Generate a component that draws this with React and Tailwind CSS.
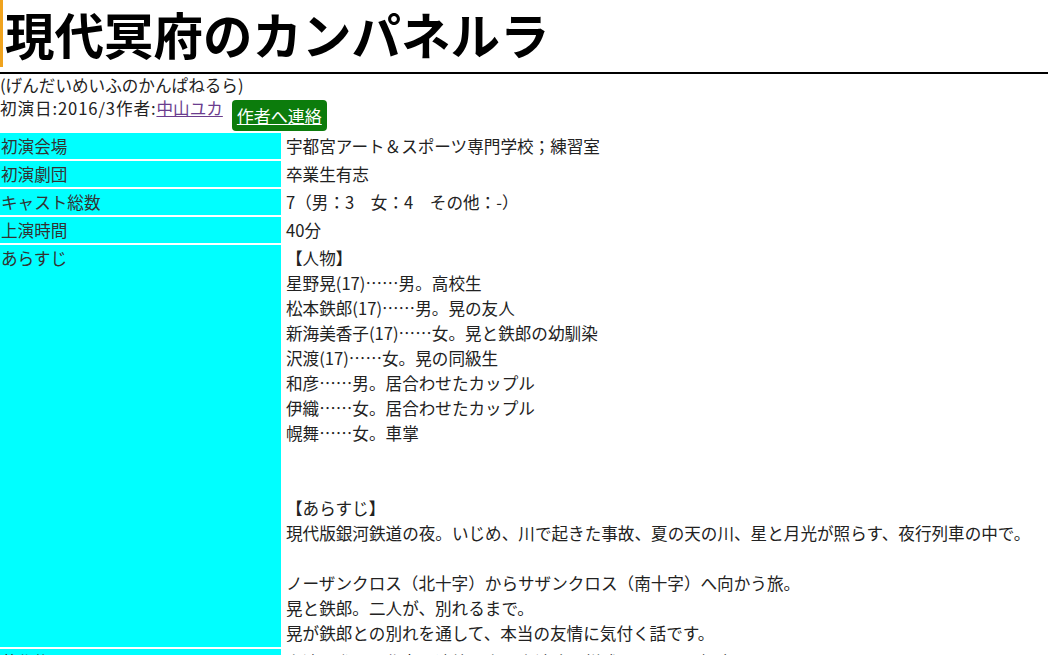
export default function App() {
  const cast = [
    "【人物】",
    "星野晃(17)……男。高校生",
    "松本鉄郎(17)……男。晃の友人",
    "新海美香子(17)……女。晃と鉄郎の幼馴染",
    "沢渡(17)……女。晃の同級生",
    "和彦……男。居合わせたカップル",
    "伊織……女。居合わせたカップル",
    "幌舞……女。車掌",
    "",
    "",
    "【あらすじ】",
    "現代版銀河鉄道の夜。いじめ、川で起きた事故、夏の天の川、星と月光が照らす、夜行列車の中で。",
    "",
    "ノーザンクロス（北十字）からサザンクロス（南十字）へ向かう旅。",
    "晃と鉄郎。二人が、別れるまで。",
    "晃が鉄郎との別れを通して、本当の友情に気付く話です。",
  ];
  const rows = [
    ["初演会場", "宇都宮アート＆スポーツ専門学校；練習室"],
    ["初演劇団", "卒業生有志"],
    ["キャスト総数", "7（男：3　女：4　その他：-）"],
    ["上演時間", "40分"],
  ];
  return (
    <div className="min-h-[655px] bg-white font-['Noto_Sans_CJK_JP','Noto_Sans',sans-serif] text-[16.6px] text-[#222]">
      <div className="border-b-2 border-black pb-[5px]">
        <h1 className="border-l-[3px] border-[#f0a31e] pl-[2px] text-[49.5px] font-bold leading-[67px] text-black">
          現代冥府のカンパネルラ
        </h1>
      </div>
      <div className="leading-[23px]">(げんだいめいふのかんぱねるら)</div>
      <div className="flex items-start">
        <span className="leading-[22px]">
          <span className="tracking-[0.9px]">初演日:2016/3作者:</span>
          <a href="#" className="text-[#6b3d8e] underline">
            中山ユカ
          </a>
        </span>
        <a
          href="#"
          className="ml-[9px] mt-[3px] inline-block rounded-[4px] bg-[#0c7c0c] px-[5px] text-[17px] leading-[31px] text-white underline"
        >
          作者へ連絡
        </a>
      </div>
      <div className="mt-[2px] grid grid-cols-[281px_1fr] gap-[2px]">
        {rows.map(([k, v]) => (
          <div key={k} className="contents">
            <div className="bg-[#00ffff] pl-px leading-[26px] text-[#333]">{k}</div>
            <div className="pl-[3px] leading-[26px]">{v}</div>
          </div>
        ))}
        <div className="bg-[#00ffff] pl-px leading-[26px] text-[#333]">あらすじ</div>
        <div className="py-px pl-[3px] leading-[25px]">
          {cast.map((line, i) => (
            <div key={i} className="h-[25px] whitespace-nowrap">
              {line}
            </div>
          ))}
        </div>
        <div className="bg-[#00ffff] pl-px leading-[26px] text-[#333]">著作権</div>
        <div className="pl-[3px] leading-[26px]">上演の際は、作者へ連絡の上、上演許可様式に記入して提出して下さい。</div>
      </div>
    </div>
  );
}
